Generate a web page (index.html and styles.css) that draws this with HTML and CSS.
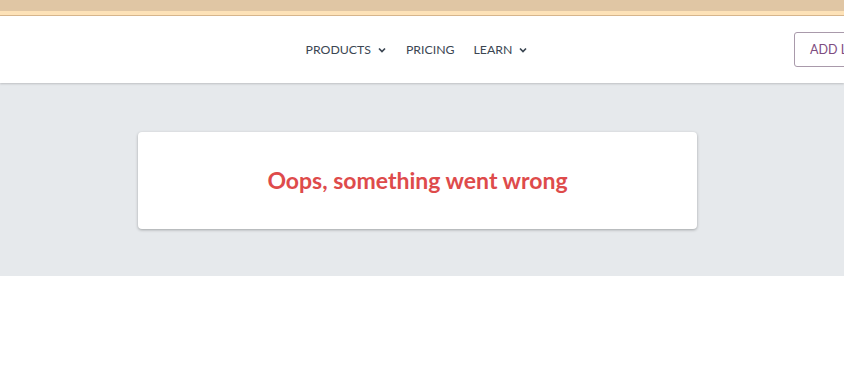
FILE: index.html
```html
<!DOCTYPE html>
<html lang="en">
<head>
    <meta charset="UTF-8">
    <meta name="viewport" content="width=device-width, initial-scale=1.0">
    <title>Error</title>
    <link rel="stylesheet" href="styles.css">
</head>
<body>
    <div class="promo-bar"></div>

    <div class="header">
        <nav class="nav">
            <a href="#" class="nav-item">PRODUCTS
                <svg class="chevron" viewBox="0 0 10 10"><path d="M2 3.5 L5 6.5 L8 3.5" /></svg>
            </a>
            <a href="#" class="nav-item">PRICING</a>
            <a href="#" class="nav-item">LEARN
                <svg class="chevron" viewBox="0 0 10 10"><path d="M2 3.5 L5 6.5 L8 3.5" /></svg>
            </a>
        </nav>
        <a href="#" class="add-btn">ADD LISTING</a>
    </div>

    <div class="error-area">
        <div class="error-card">
            <h2>Oops, something went wrong</h2>
        </div>
    </div>
</body>
</html>
```

FILE: styles.css
```css
body {
    font-family: Lato, "Noto Sans", sans-serif;
    margin: 0;
    background-color: #ffffff;
    overflow: hidden;
}

.promo-bar {
    height: 11px;
    background-color: #e0c6a4;
    border-bottom: 4px solid #fde2b8;
    box-shadow: 0 1px 0 #d9b88e;
}

.header {
    height: 67px;
    margin-top: 1px;
    display: flex;
    align-items: center;
    justify-content: center;
    position: relative;
    background-color: #ffffff;
    box-shadow: 0 1px 2px rgba(0, 0, 0, 0.18);
    z-index: 1;
}

.nav {
    display: flex;
    align-items: center;
    gap: 19px;
    margin-left: -10px;
}

.nav-item {
    display: flex;
    align-items: center;
    gap: 6px;
    font-size: 12.3px;
    color: #3b4652;
    text-decoration: none;
}

.chevron {
    width: 10px;
    height: 10px;
    fill: none;
    stroke: #3b4652;
    stroke-width: 1.7;
}

.add-btn {
    position: absolute;
    left: 794px;
    top: 16px;
    height: 33px;
    padding: 0 15px;
    display: flex;
    align-items: center;
    border: 1px solid #a99aab;
    border-radius: 3px;
    font-size: 12.5px;
    color: #7d4c80;
    text-decoration: none;
    white-space: nowrap;
}

.error-area {
    height: 193px;
    padding-top: 49px;
    box-sizing: border-box;
    background-color: #e6e9ec;
}

.error-card {
    width: 559px;
    height: 97px;
    margin-left: 138px;
    display: flex;
    align-items: center;
    justify-content: center;
    background-color: #ffffff;
    border-radius: 4px;
    box-shadow: 0 1px 3px rgba(0, 0, 0, 0.3);
}

.error-card h2 {
    margin: 0;
    margin-top: -2px;
    font-size: 23px;
    font-weight: 700;
    color: #de4b4b;
}
```
